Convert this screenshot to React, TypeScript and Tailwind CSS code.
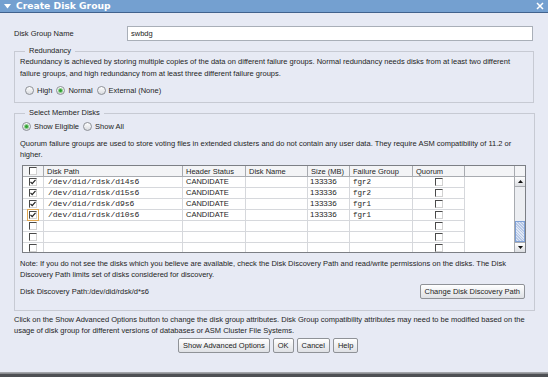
import React from 'react';

const cols = [
  { label: '', w: 'w-[21px]' },
  { label: 'Disk Path', w: 'w-[139px]' },
  { label: 'Header Status', w: 'w-[63px]' },
  { label: 'Disk Name', w: 'w-[62px]' },
  { label: 'Size (MB)', w: 'w-[42px]' },
  { label: 'Failure Group', w: 'w-[63px]' },
  { label: 'Quorum', w: 'w-[52px]' },
];

const disks = [
  { path: '/dev/did/rdsk/d14s6', status: 'CANDIDATE', size: '133336', group: 'fgr2' },
  { path: '/dev/did/rdsk/d15s6', status: 'CANDIDATE', size: '133336', group: 'fgr2' },
  { path: '/dev/did/rdsk/d9s6', status: 'CANDIDATE', size: '133336', group: 'fgr1' },
  { path: '/dev/did/rdsk/d10s6', status: 'CANDIDATE', size: '133336', group: 'fgr1' },
  null,
  null,
  null,
];

function Radio({ checked, label }: { checked?: boolean; label: string }) {
  return (
    <label className="flex items-center gap-[3px]">
      <span className="w-[9px] h-[9px] rounded-full border border-[#8d9096] bg-gradient-to-b from-white to-[#d9dbe0] flex items-center justify-center">
        {checked && <span className="w-[3px] h-[3px] rounded-full bg-[#2f9e2f] ring-1 ring-[#8fd08f]" />}
      </span>
      <span>{label}</span>
    </label>
  );
}

function Check({ checked, focus }: { checked?: boolean; focus?: boolean }) {
  return (
    <span
      className={`w-[8px] h-[8px] flex items-center justify-center bg-white border-t-[1.5px] border-l-[1.5px] border-t-[#4a4a4a] border-l-[#4a4a4a] border-r border-b border-r-[#d2d2d2] border-b-[#d2d2d2] ${focus ? 'outline outline-1 outline-offset-1 outline-[#e0a650]' : ''}`}
    >
      {checked && (
        <svg width="6" height="6" viewBox="0 0 6 6">
          <path d="M0.5 2.8 L2.2 4.7 L5.5 0.8" stroke="#222" strokeWidth="1.2" fill="none" />
        </svg>
      )}
    </span>
  );
}

function Btn({ children }: { children: React.ReactNode }) {
  return (
    <button className="h-[15px] px-[4px] border border-[#8f9297] rounded-[2px] bg-gradient-to-b from-white to-[#dfe1e5] text-[7.5px] leading-none text-[#222]">
      {children}
    </button>
  );
}

export default function App() {
  return (
    <div className="w-[548px] h-[377px] bg-[#e7eaf4] flex flex-col overflow-hidden font-['Liberation_Sans',Arial,sans-serif] text-[7.5px] text-[#1e1e1e]">
      {/* Title bar */}
      <div className="h-[13px] bg-[#74a0d0] border-b border-[#41628d] flex items-center pl-[4px] pr-[4px] shrink-0">
        <svg width="7" height="5" viewBox="0 0 7 5" className="mr-[5px]">
          <path d="M0 0 H7 L3.5 4.5 Z" fill="#fff" />
        </svg>
        <span className="font-['DejaVu_Sans',sans-serif] font-bold text-[9.2px] text-white leading-none">Create Disk Group</span>
        <svg width="8" height="8" viewBox="0 0 8 8" className="ml-auto">
          <path d="M1 1 L7 7 M7 1 L1 7" stroke="#fff" strokeWidth="1.5" />
        </svg>
      </div>

      <div className="flex-1 flex flex-col px-[14px] pt-[13px]">
        {/* Name row */}
        <div className="flex items-center h-[15px]">
          <span className="w-[113px]">Disk Group Name</span>
          <div className="w-[406px] h-[15px] bg-white border border-[#a9afb8] flex items-center pl-[3px]">swbdg</div>
        </div>

        {/* Redundancy */}
        <fieldset className="mt-[5px] border border-[#c7cad3] pl-[5px] pr-[8px] pb-[5px] h-[57px]">
          <legend className="ml-[5px] px-[4px] leading-[10px]">Redundancy</legend>
          <p className="leading-[12px]">
            Redundancy is achieved by storing multiple copies of the data on different failure groups. Normal redundancy needs disks from at least two different
            failure groups, and high redundancy from at least three different failure groups.
          </p>
          <div className="flex items-center gap-[4px] mt-[5px] pl-[5px]">
            <Radio label="High" />
            <Radio checked label="Normal" />
            <Radio label="External (None)" />
          </div>
        </fieldset>

        {/* Select Member Disks */}
        <fieldset className="mt-[5px] border border-[#c7cad3] pl-[5px] pr-[8px] h-[203px]">
          <legend className="ml-[5px] px-[4px] leading-[10px]">Select Member Disks</legend>
          <div className="flex items-center gap-[4px] mt-[3px] pl-[2px]">
            <Radio checked label="Show Eligible" />
            <Radio label="Show All" />
          </div>
          <p className="leading-[11px] mt-[6px]">
            Quorum failure groups are used to store voting files in extended clusters and do not contain any user data. They require ASM compatibility of 11.2 or
            higher.
          </p>

          {/* Table */}
          <div className="mt-[5px] ml-[2px] w-[504px] h-[88px] border border-[#7c7f85] flex bg-white overflow-hidden">
            <div className="flex-1 flex flex-col">
              <div className="h-[11px] flex bg-[#f3f4f6] border-b border-[#a8abb0] shrink-0">
                {cols.map((c, i) => (
                  <div
                    key={i}
                    className={`${c.w} shrink-0 h-full border-r border-[#a8abb0] flex items-center ${i === 0 ? 'justify-center' : 'pl-[3px]'}`}
                  >
                    {i === 0 ? <Check /> : c.label}
                  </div>
                ))}
              </div>
              {disks.map((d, r) => (
                <div key={r} className="h-[11px] flex shrink-0">
                  <div className="w-[21px] shrink-0 border-r border-b border-[#d6d8dc] flex items-center justify-center">
                    <Check checked={!!d} focus={r === 3} />
                  </div>
                  <div className="w-[139px] shrink-0 border-r border-b border-[#d6d8dc] pl-[4px] font-['Liberation_Mono',monospace] text-[8px] leading-[10px]">
                    {d?.path}
                  </div>
                  <div className="w-[63px] shrink-0 border-r border-b border-[#d6d8dc] pl-[3px] leading-[9px]">{d?.status}</div>
                  <div className="w-[62px] shrink-0 border-r border-b border-[#d6d8dc]" />
                  <div className="w-[42px] shrink-0 border-r border-b border-[#d6d8dc] pl-[2px] leading-[9px] text-[8px]">{d?.size}</div>
                  <div className="w-[63px] shrink-0 border-r border-b border-[#d6d8dc] pl-[3px] font-['Liberation_Mono',monospace] text-[7.5px] leading-[10px]">
                    {d?.group}
                  </div>
                  <div className="w-[52px] shrink-0 border-r border-b border-[#d6d8dc] flex items-center justify-center">
                    <Check />
                  </div>
                </div>
              ))}
            </div>
            {/* Scrollbar */}
            <div className="w-[11px] flex flex-col border-l border-[#a8abb0] bg-[#eceef2] shrink-0">
              <div className="h-[11px] bg-[#f3f4f6] border-b border-[#a8abb0] shrink-0" />
              <div className="h-[10px] border-b border-[#a8abb0] bg-gradient-to-b from-white to-[#dcdee2] flex items-center justify-center shrink-0">
                <svg width="5" height="3" viewBox="0 0 5 3"><path d="M0 3 L2.5 0 L5 3 Z" fill="#111" /></svg>
              </div>
              <div className="flex-1 flex flex-col justify-end">
                <div className="h-[21px] border border-[#7ea0d6] bg-[repeating-linear-gradient(45deg,#b7c8e6_0px,#b7c8e6_1px,#dfe7f5_1px,#dfe7f5_2px)]" />
              </div>
              <div className="h-[10px] border-t border-[#a8abb0] bg-gradient-to-b from-white to-[#dcdee2] flex items-center justify-center shrink-0">
                <svg width="5" height="3" viewBox="0 0 5 3"><path d="M0 0 L2.5 3 L5 0 Z" fill="#111" /></svg>
              </div>
            </div>
          </div>

          <p className="leading-[11px] mt-[5px]">
            Note: If you do not see the disks which you believe are available, check the Disk Discovery Path and read/write permissions on the disks. The Disk
            Discovery Path limits set of disks considered for discovery.
          </p>
          <div className="flex items-center mt-[2px] h-[18px]">
            <span>Disk Discovery Path:/dev/did/rdsk/d*s6</span>
            <div className="ml-auto mr-[1px]">
              <Btn>Change Disk Discovery Path</Btn>
            </div>
          </div>
        </fieldset>

        <p className="leading-[11px] mt-[3px]">
          Click on the Show Advanced Options button to change the disk group attributes. Disk Group compatibility attributes may need to be modified based on the
          usage of disk group for different versions of databases or ASM Cluster File Systems.
        </p>

        <div className="flex gap-[3px] pl-[164px] mt-[2px]">
          <Btn>Show Advanced Options</Btn>
          <Btn>OK</Btn>
          <Btn>Cancel</Btn>
          <Btn>Help</Btn>
        </div>
      </div>

      {/* Bottom edge */}
      <div className="h-[1px] bg-[#a3a5aa] shrink-0" />
      <div className="h-[4px] bg-[#4e5054] border-t border-[#8a8c90] shrink-0" />
    </div>
  );
}
